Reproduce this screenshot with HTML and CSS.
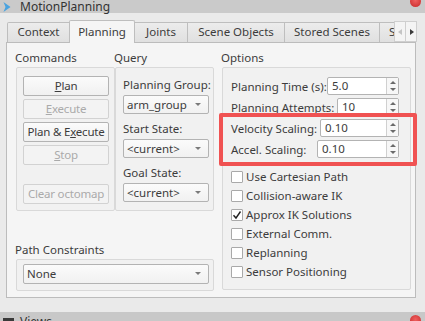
FILE: index.html
```html
<!DOCTYPE html>
<html>
	<head>
		<title>MotionPlanning</title>
		<link rel="stylesheet" href="styles.css">
	</head>
	<body>
		<div class="dock-title">
			<svg class="title-icon" width="8" height="10" viewBox="0 0 8 10"><path d="M0.5 0 L7.5 5 L0.5 10 L2.5 5 Z" fill="#4aa3df"/></svg>
			<span class="title-text">MotionPlanning</span>
			<span class="close-dot"></span>
		</div>
		<div class="dock">
			<div class="tabs">
				<div class="tab tab-context">Context</div>
				<div class="tab tab-planning selected">Planning</div>
				<div class="tab tab-joints">Joints</div>
				<div class="tab tab-scene">Scene Objects</div>
				<div class="tab tab-stored">Stored Scenes</div>
				<div class="tab tab-more">S</div>
				<div class="tab-scroll">
					<span class="scroll-btn left"></span>
					<span class="scroll-btn right"></span>
				</div>
			</div>
			<div class="panel">
				<div class="left-col">
					<div class="cols">
						<div class="col">
							<div class="heading">Commands</div>
							<div class="group commands">
								<div class="btn"><u>P</u>lan</div>
								<div class="btn disabled"><u>E</u>xecute</div>
								<div class="btn">Plan &amp; E<u>x</u>ecute</div>
								<div class="btn disabled"><u>S</u>top</div>
								<div class="btn disabled clear">Clear octomap</div>
							</div>
						</div>
						<div class="col">
							<div class="heading">Query</div>
							<div class="group query">
								<div class="field-label">Planning Group:</div>
								<div class="combo">arm_group</div>
								<div class="field-label">Start State:</div>
								<div class="combo">&lt;current&gt;</div>
								<div class="field-label">Goal State:</div>
								<div class="combo">&lt;current&gt;</div>
							</div>
						</div>
					</div>
					<div class="heading path-heading">Path Constraints</div>
					<div class="group path">
						<div class="combo wide">None</div>
					</div>
				</div>
				<div class="col options-col">
					<div class="heading">Options</div>
					<div class="group options">
						<div class="spin-row">
							<span>Planning Time (s):</span>
							<div class="spin spin-time">5.0<span class="spin-arrows"><i class="up"></i><i class="down"></i></span></div>
						</div>
						<div class="spin-row">
							<span>Planning Attempts:</span>
							<div class="spin spin-attempts">10<span class="spin-arrows"><i class="up"></i><i class="down"></i></span></div>
						</div>
						<div class="highlighted">
							<div class="spin-row">
								<span>Velocity Scaling:</span>
								<div class="spin spin-velocity">0.10<span class="spin-arrows"><i class="up"></i><i class="down"></i></span></div>
							</div>
							<div class="spin-row">
								<span>Accel. Scaling:</span>
								<div class="spin spin-accel">0.10<span class="spin-arrows"><i class="up"></i><i class="down"></i></span></div>
							</div>
						</div>
						<div class="checks">
							<div class="check"><span class="box"></span>Use Cartesian Path</div>
							<div class="check"><span class="box"></span>Collision-aware IK</div>
							<div class="check"><span class="box"><svg width="10" height="10" viewBox="0 0 10 10"><path d="M1.5 5.2 L4 8 L8.5 1.5" fill="none" stroke="#222" stroke-width="1.4"/></svg></span>Approx IK Solutions</div>
							<div class="check"><span class="box"></span>External Comm.</div>
							<div class="check"><span class="box"></span>Replanning</div>
							<div class="check"><span class="box"></span>Sensor Positioning</div>
						</div>
					</div>
				</div>
			</div>
		</div>
		<div class="views-bar">
			<svg class="views-icon" width="11" height="8" viewBox="0 0 11 8"><rect x="0" y="0" width="11" height="8" fill="#3a3a3a"/></svg>
			<span class="title-text">Views</span>
			<span class="close-dot"></span>
		</div>
	</body>
</html>
```

FILE: styles.css
```css
body {
	margin: 0;
	width: 425px;
	height: 321px;
	overflow: hidden;
	background-color: #eaeaea;
	font-family: "Noto Sans", sans-serif;
	font-size: 11.5px;
	color: #3c3c3c;
}

/* dock title bars */

.dock-title {
	height: 13px;
	background-color: #cacaca;
	display: flex;
	align-items: center;
	padding-left: 3px;
}

.title-icon {
	margin-right: 9px;
}

.title-text {
	font-size: 12px;
	line-height: 13px;
	color: #333333;
}

.close-dot {
	width: 11px;
	height: 11px;
	border-radius: 50%;
	background: radial-gradient(circle at 50% 40%, #f06060, #c62828);
	margin-left: auto;
	margin-right: 4px;
	align-self: flex-start;
	margin-top: -4px;
}

.views-bar {
	margin-top: 14px;
	height: 9px;
	background-color: #c8c8c8;
	display: flex;
	align-items: flex-start;
	padding-left: 3px;
	padding-top: 3px;
}

.views-bar .title-text {
	line-height: 13px;
}

.views-bar .close-dot {
	align-self: flex-start;
	margin-top: 0;
}

.views-icon {
	margin-right: 6px;
	margin-top: 3px;
}

/* tabs */

.dock {
	padding: 7px 9px 0 6px;
}

.tabs {
	display: flex;
	align-items: flex-end;
	height: 22px;
	padding-left: 1px;
	position: relative;
}

.tab {
	box-sizing: border-box;
	height: 20px;
	line-height: 18px;
	text-align: center;
	background: linear-gradient(#ececec, #e0e0e0);
	border: 1px solid #bebebe;
	border-bottom: none;
	border-left: none;
	white-space: nowrap;
	overflow: hidden;
}

.tab-context {
	width: 63px;
	border-left: 1px solid #bebebe;
	border-radius: 2px 0 0 0;
}
.tab-planning { width: 65px; }
.tab-joints { width: 53px; }
.tab-scene { width: 97px; }
.tab-stored { width: 95px; }
.tab-more {
	width: 20px;
	text-align: left;
	padding-left: 9px;
}

.tab.selected {
	height: 23px;
	line-height: 21px;
	margin-bottom: -1px;
	background: #f5f5f5;
	border-left: 1px solid #bebebe;
	margin-left: -1px;
	width: 66px;
	position: relative;
	z-index: 1;
	border-radius: 2px 2px 0 0;
}

.tab-scroll {
	position: absolute;
	left: 388px;
	top: 1px;
	display: flex;
	z-index: 2;
}

.scroll-btn {
	width: 12px;
	height: 21px;
	box-sizing: border-box;
	border: 1px solid #cfcfcf;
	background: #f4f4f4;
	position: relative;
}

.scroll-btn + .scroll-btn {
	border-left: none;
	width: 11px;
}

.scroll-btn::after {
	content: "";
	position: absolute;
	top: 7px;
	left: 3px;
	border-top: 3px solid transparent;
	border-bottom: 3px solid transparent;
}

.scroll-btn.left::after {
	border-right: 4px solid #c4c4c4;
}

.scroll-btn.right::after {
	border-left: 4px solid #3a3a3a;
	left: 4px;
}

/* tab page */

.panel {
	box-sizing: border-box;
	width: 410px;
	height: 256px;
	border: 1px solid #bcbcbc;
	background-color: #f5f5f5;
	padding: 8px 4px 0 9px;
	display: flex;
	gap: 8px;
}

.left-col {
	width: 198px;
	display: flex;
	flex-direction: column;
}

.cols {
	display: flex;
}

.col {
	display: flex;
	flex-direction: column;
}

.heading {
	height: 14px;
	line-height: 14px;
	margin-bottom: 2px;
	margin-left: -1px;
}

.group {
	box-sizing: border-box;
	border: 1px solid #d9d9d9;
	border-radius: 2px;
	background-color: #f1f1f1;
}

.commands {
	width: 99px;
	height: 144px;
	padding: 8px 5px 0 6px;
	display: flex;
	flex-direction: column;
	gap: 3px;
}

.btn {
	box-sizing: border-box;
	height: 20px;
	line-height: 18px;
	text-align: center;
	border: 1px solid #b3b3b3;
	border-radius: 2px;
	background: linear-gradient(#fbfbfb, #f0f0f0);
	white-space: nowrap;
	letter-spacing: -0.2px;
}

.btn.disabled {
	color: #aaaaaa;
	border-color: #d2d2d2;
	background: #f3f3f3;
}

.btn.clear {
	margin-top: 16px;
}

.query {
	width: 99px;
	height: 144px;
	padding: 9px 4px 0 7px;
	display: flex;
	flex-direction: column;
}

.field-label {
	height: 15px;
	line-height: 15px;
	margin-bottom: 3px;
	white-space: nowrap;
}

.combo {
	box-sizing: border-box;
	height: 19px;
	line-height: 17px;
	border: 1px solid #b3b3b3;
	border-radius: 2px;
	background: linear-gradient(#fbfbfb, #f1f1f1);
	padding-left: 3px;
	margin-bottom: 7px;
	position: relative;
	white-space: nowrap;
}

.combo::after {
	content: "";
	position: absolute;
	right: 7px;
	top: 7px;
	border-left: 3px solid transparent;
	border-right: 3px solid transparent;
	border-top: 3px solid #7a7a7a;
}

.path-heading {
	margin-top: 32px;
}

.path {
	height: 32px;
	padding: 4px 4px 0 6px;
}

.combo.wide {
	height: 20px;
	line-height: 18px;
	margin-bottom: 0;
}

/* options */

.options {
	width: 189px;
	height: 223px;
	padding: 9px 11px 0 8px;
}

.spin-row {
	display: flex;
	justify-content: space-between;
	align-items: center;
	height: 18px;
	margin-bottom: 3px;
	white-space: nowrap;
}

.spin {
	box-sizing: border-box;
	height: 18px;
	line-height: 16px;
	border: 1px solid #b3b3b3;
	border-radius: 2px;
	background-color: #ffffff;
	padding-left: 4px;
	position: relative;
}

.spin-time { width: 72px; }
.spin-attempts { width: 62px; }
.spin-velocity { width: 79px; }
.spin-accel { width: 82px; }

.spin-arrows {
	position: absolute;
	right: 0;
	top: 0;
	bottom: 0;
	width: 11px;
	border-left: 1px solid #d0d0d0;
	background: #f7f7f7;
}

.spin-arrows i {
	position: absolute;
	left: 3px;
	border-left: 3px solid transparent;
	border-right: 3px solid transparent;
}

.spin-arrows .up {
	top: 3px;
	border-bottom: 3px solid #6a6a6a;
}

.spin-arrows .down {
	bottom: 3px;
	border-top: 3px solid #6a6a6a;
}

.highlighted {
	position: relative;
	margin-top: 2px;
}

.highlighted::before {
	content: "";
	position: absolute;
	top: -6px;
	bottom: -8px;
	left: -12px;
	right: -18px;
	border: 4px solid #f05252;
	border-radius: 2px;
	pointer-events: none;
}

.checks {
	margin-top: 9px;
}

.check {
	height: 19px;
	display: flex;
	align-items: center;
	white-space: nowrap;
}

.box {
	box-sizing: border-box;
	width: 12px;
	height: 12px;
	border: 1px solid #a9a9a9;
	border-radius: 1px;
	background-color: #ffffff;
	margin-right: 3px;
	display: flex;
	align-items: center;
	justify-content: center;
}
```
